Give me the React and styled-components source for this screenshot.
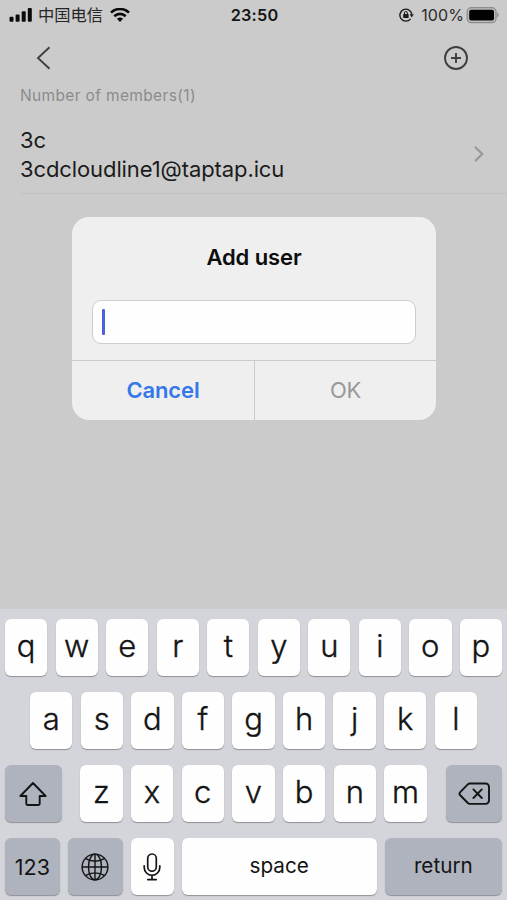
import React from "react";
import styled, { createGlobalStyle } from "styled-components";

const GlobalStyle = createGlobalStyle`
  * { box-sizing: border-box; }
  body {
    margin: 0;
    font-family: Inter, "Noto Sans CJK SC", sans-serif;
    background: #cbcbcb;
  }
  button { border: 0; padding: 0; margin: 0; font: inherit; background: none; }
  svg { display: block; flex: none; }
`;

const Screen = styled.main`
  position: relative;
  width: 507px;
  height: 900px;
  overflow: hidden;
  display: flex;
  flex-direction: column;
  background: #cbcbcb;
  color: #161616;
`;

const StatusBar = styled.header`
  display: grid;
  grid-template-columns: 1fr auto 1fr;
  align-items: center;
  height: 30px;
  padding: 0 8px 0 9px;
`;

const StatusGroup = styled.div`
  display: flex;
  align-items: center;
  justify-content: ${(p) => (p.$end ? "flex-end" : "flex-start")};
`;

const Carrier = styled.span`
  margin: 0 7px 0 6px;
  padding-bottom: 2px;
  font: 400 16.3px/28px "Noto Sans CJK SC", sans-serif;
  color: #262626;
`;

const Clock = styled.time`
  padding-left: 1px;
  font-size: 16.3px;
  font-weight: 600;
  letter-spacing: 0.2px;
  color: #161616;
`;

const Percent = styled.span`
  margin: 0 2px 0 7px;
  font-size: 16px;
  letter-spacing: 0.1px;
  color: #2b2b2b;
`;

const NavBar = styled.nav`
  display: flex;
  justify-content: space-between;
  align-items: center;
  height: 56px;
  padding: 0 38px 0 36px;
`;

const SectionLabel = styled.h2`
  margin: 0;
  padding-left: 20px;
  height: 20px;
  font-size: 15.5px;
  font-weight: 400;
  line-height: 20px;
  letter-spacing: 0.35px;
  color: #8b8b8b;
`;

const MemberRow = styled.section`
  display: flex;
  align-items: center;
  justify-content: space-between;
  height: 88px;
  margin-left: 20px;
  padding: 9px 23px 0 0;
  border-bottom: 1px solid #c1c1c1;
`;

const MemberDetails = styled.div`
  padding-top: 2px;
`;

const MemberText = styled.p`
  margin: 0;
  font-size: 22px;
  line-height: 29px;
  letter-spacing: -0.1px;
  color: #1b1b1b;
`;

const Dialog = styled.div`
  position: absolute;
  left: 72px;
  top: 217px;
  width: 364px;
  height: 203px;
  display: flex;
  flex-direction: column;
  border-radius: 17px;
  background: #efefef;
  overflow: hidden;
`;

const DialogTitle = styled.h1`
  margin: 0;
  height: 83px;
  font-size: 22px;
  font-weight: 600;
  line-height: 81px;
  letter-spacing: -0.1px;
  text-align: center;
  color: #0d0d0d;
`;

const Field = styled.div`
  display: flex;
  align-items: center;
  height: 44px;
  margin: 0 20px 16px;
  padding-left: 9px;
  border: 1px solid #cdcdcd;
  border-radius: 9px;
  background: #fefefe;
`;

const Caret = styled.span`
  width: 3px;
  height: 26px;
  border-radius: 1px;
  background: #4c63dc;
`;

const DialogActions = styled.div`
  flex: 1;
  display: grid;
  grid-template-columns: 1fr 1fr;
  border-top: 1px solid #cacaca;
`;

const DialogButton = styled.button`
  padding-bottom: 1px;
  font-size: 22px;
  font-weight: ${(p) => (p.$primary ? 600 : 400)};
  letter-spacing: ${(p) => (p.$primary ? "-0.15px" : "-0.3px")};
  color: ${(p) => (p.$primary ? "#3478ea" : "#989898")};
  & + & { border-left: 1px solid #cacaca; }
`;

const Keyboard = styled.section`
  display: flex;
  flex-direction: column;
  gap: 16px;
  height: 291px;
  margin-top: auto;
  padding: 10.4px 5px 0;
  background: #d4d5db;
`;

const KeyRow = styled.div`
  display: flex;
  gap: 8.15px;
  height: 56.9px;
  padding: 0 ${(p) => p.$inset || 0}px;
`;

const Letters = styled.div`
  flex: 1;
  display: flex;
  gap: 8.15px;
  padding: 0 ${(p) => p.$inset || 0}px;
`;

const Key = styled.button`
  flex: ${(p) => (p.$width ? `0 0 ${p.$width}px` : "1 1 0")};
  min-width: 0;
  display: flex;
  align-items: center;
  justify-content: center;
  padding-bottom: ${(p) => p.$lift ?? 5}px;
  border-radius: 6px;
  background: ${(p) => (p.$dark ? "#afb3bd" : "#fefefe")};
  box-shadow: 0 1px 1px #8f9095;
  font-size: ${(p) => p.$size || 31}px;
  font-weight: ${(p) => (p.$size ? 400 : 300)};
  -webkit-text-stroke: ${(p) => (p.$size ? 0 : 0.35)}px #141414;
  color: #141414;
`;

const SignalIcon = () => (
  <svg width="23" height="15" viewBox="0 0 23 15" fill="#0b0b0b">
    <rect x="0.5" y="8.8" width="4" height="5" rx="1" />
    <rect x="6.6" y="6.5" width="4" height="7.3" rx="1" />
    <rect x="12.7" y="3.3" width="4" height="10.5" rx="1" />
    <rect x="18.8" y="0" width="4" height="13.8" rx="1" />
  </svg>
);

const WifiIcon = () => (
  <svg width="20" height="15" viewBox="0 0 20 15" fill="none" stroke="#0b0b0b" strokeWidth="2.6">
    <path d="M1 4.7C6-.3 14-.3 19 4.7" />
    <path d="M4.3 8.2c3.2-3.1 8.2-3.1 11.4 0" />
    <path d="M6.9 10.8C8.7 9 11.3 9 13.1 10.8L10 13.9Z" fill="#0b0b0b" stroke="none" />
  </svg>
);

const LockIcon = () => (
  <svg width="15" height="14" viewBox="0 0 15 14" fill="none" stroke="#1c1c1c" strokeWidth="1.4">
    <path d="M11.6 10.9A6 6 0 1 1 12.8 6" />
    <path d="M10.6 6.2h4.2l-2.1 3.2z" fill="#1c1c1c" stroke="none" />
    <rect x="4.2" y="6" width="5.4" height="4" rx="0.5" fill="#1c1c1c" stroke="none" />
    <path d="M5.4 6.3V5a1.5 1.5 0 0 1 3 0v1.3" strokeWidth="1" />
  </svg>
);

const BatteryIcon = () => (
  <svg width="33" height="17" viewBox="0 0 33 17">
    <rect x="1.2" y="0.7" width="28.8" height="15" rx="4.2" fill="#bdbdbd" stroke="#8d8d8d" strokeWidth="1.3" />
    <rect x="3.2" y="2.8" width="24.8" height="10.8" rx="2" fill="#020202" />
    <path d="M31.2 5.6c1.8.5 1.8 4.3 0 4.8z" fill="#858585" />
  </svg>
);

const BackIcon = () => (
  <svg width="16" height="24" viewBox="0 0 16 24" fill="none" stroke="#404040" strokeWidth="1.9">
    <path d="M13.5 1.2 2 12l11.5 10.8" />
  </svg>
);

const AddIcon = () => (
  <svg width="26" height="26" viewBox="0 0 26 26" fill="none" stroke="#3f3f3f" strokeWidth="1.9">
    <circle cx="13" cy="13" r="11" />
    <path d="M8 13h10M13 8v10" />
  </svg>
);

const ChevronIcon = () => (
  <svg width="10" height="16" viewBox="0 0 10 16" fill="none" stroke="#999" strokeWidth="2.2">
    <path d="m1 .9 7.2 7.1L1 15.1" />
  </svg>
);

const ShiftIcon = () => (
  <svg width="28" height="26" viewBox="0 0 28 26" fill="none" stroke="#141414" strokeWidth="1.9" strokeLinejoin="round">
    <path d="M14 2 26.6 15H20.7V22.7a1.3 1.3 0 0 1-1.3 1.3H8.6a1.3 1.3 0 0 1-1.3-1.3V15H1.4Z" />
  </svg>
);

const DeleteIcon = () => (
  <svg width="32" height="24" viewBox="0 0 32 24" fill="none" stroke="#141414" strokeWidth="1.9" strokeLinejoin="round" strokeLinecap="round">
    <path d="M11.8 1.5h15.8A3.4 3.4 0 0 1 31 4.9v13.6a3.4 3.4 0 0 1-3.4 3.4H11.8a3 3 0 0 1-2-.9L2 13a1.8 1.8 0 0 1 0-2.6L9.8 2.4a3 3 0 0 1 2-.9Z" />
    <path d="m15.4 7.4 8.4 8.6M23.8 7.4 15.4 16" />
  </svg>
);

const GlobeIcon = () => (
  <svg width="28" height="28" viewBox="0 0 28 28" fill="none" stroke="#141414" strokeWidth="1.4">
    <circle cx="14" cy="14" r="12.9" />
    <ellipse cx="14" cy="14" rx="6.5" ry="12.9" />
    <path d="M14 1.1v25.8M1.1 14h25.8M4.3 5.4c5.4 3.7 14 3.7 19.4 0M4.3 22.6c5.4-3.7 14-3.7 19.4 0" />
  </svg>
);

const MicIcon = () => (
  <svg width="18" height="28" viewBox="0 0 18 28" fill="none" stroke="#141414" strokeWidth="1.7" strokeLinecap="round">
    <rect x="4.7" y="1" width="8.6" height="17.2" rx="4.3" />
    <path d="M1.2 12.8v1.7a7.8 7.8 0 0 0 15.6 0v-1.7M9 22.3v4M4.8 26.6h8.4" />
  </svg>
);

const letterKeys = (letters) => [...letters].map((c) => <Key key={c}>{c}</Key>);

export default function App() {
  return (
    <Screen>
      <GlobalStyle />
      <StatusBar>
        <StatusGroup>
          <SignalIcon />
          <Carrier>中国电信</Carrier>
          <WifiIcon />
        </StatusGroup>
        <Clock>23:50</Clock>
        <StatusGroup $end>
          <LockIcon />
          <Percent>100%</Percent>
          <BatteryIcon />
        </StatusGroup>
      </StatusBar>
      <NavBar>
        <button aria-label="Back"><BackIcon /></button>
        <button aria-label="Add"><AddIcon /></button>
      </NavBar>
      <SectionLabel>Number of members(1)</SectionLabel>
      <MemberRow>
        <MemberDetails>
          <MemberText>3c</MemberText>
          <MemberText>3cdcloudline1@taptap.icu</MemberText>
        </MemberDetails>
        <ChevronIcon />
      </MemberRow>

      <Keyboard>
        <KeyRow>{letterKeys("qwertyuiop")}</KeyRow>
        <KeyRow $inset={25}>{letterKeys("asdfghjkl")}</KeyRow>
        <KeyRow>
          <Key $dark $lift={0} $width={56.5} aria-label="Shift"><ShiftIcon /></Key>
          <Letters $inset={10.5}>{letterKeys("zxcvbnm")}</Letters>
          <Key $dark $lift={0} $width={56.5} aria-label="Delete"><DeleteIcon /></Key>
        </KeyRow>
        <KeyRow>
          <Key $dark $lift={0} $size={21.5} $width={54.8}>123</Key>
          <Key $dark $lift={0} $width={55} aria-label="Next keyboard"><GlobeIcon /></Key>
          <Key $lift={0} $width={42.6} aria-label="Dictate"><MicIcon /></Key>
          <Key $lift={2} $size={20.7}>space</Key>
          <Key $dark $lift={2} $size={20.7} $width={117.3}>return</Key>
        </KeyRow>
      </Keyboard>

      <Dialog role="dialog">
        <DialogTitle>Add user</DialogTitle>
        <Field><Caret /></Field>
        <DialogActions>
          <DialogButton $primary>Cancel</DialogButton>
          <DialogButton>OK</DialogButton>
        </DialogActions>
      </Dialog>
    </Screen>
  );
}
